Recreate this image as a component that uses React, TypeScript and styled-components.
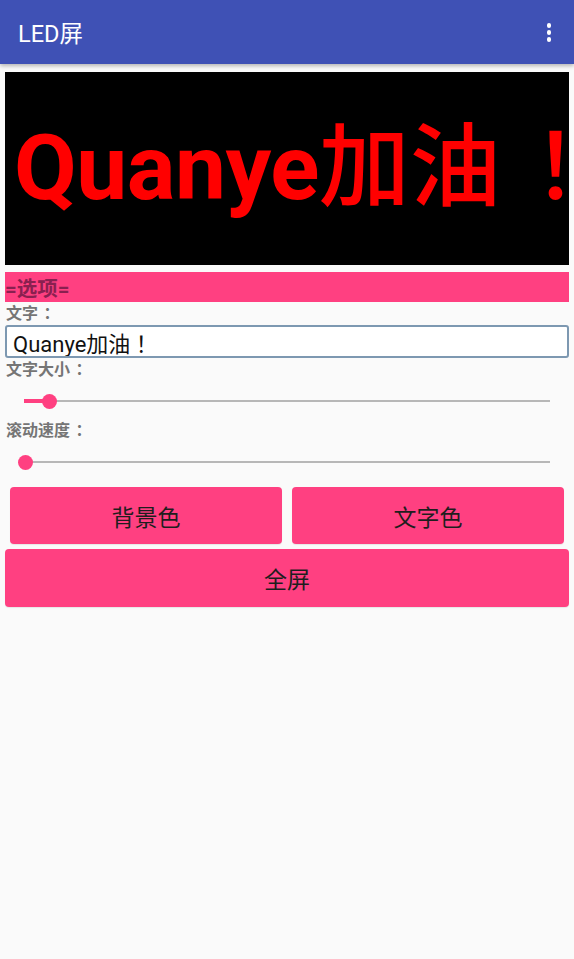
import React from 'react'
import styled, { createGlobalStyle } from 'styled-components'

const GlobalStyle = createGlobalStyle`
  html, body {
    margin: 0;
    padding: 0;
    background: #fafafa;
    font-family: Roboto, "Noto Sans CJK SC", sans-serif;
  }
`

const Page = styled.div`
  width: 574px;
  height: 959px;
  background: #fafafa;
  overflow: hidden;
`

const AppBar = styled.header`
  height: 64px;
  background: #3f51b5;
  display: flex;
  align-items: center;
  justify-content: space-between;
  padding: 0 23px 0 18px;
  box-sizing: border-box;
  box-shadow: 0 2px 4px rgba(0, 0, 0, 0.28);
  position: relative;
  z-index: 1;
  h1 {
    margin: 0;
    color: #fff;
    font-size: 23.5px;
    font-weight: 400;
  }
`

const MoreButton = styled.div`
  display: flex;
  flex-direction: column;
  gap: 2.5px;
  margin-top: 1px;
  span {
    width: 4.5px;
    height: 4.5px;
    border-radius: 50%;
    background: #fff;
  }
`

const Content = styled.main`
  padding: 8px 5px 0;
  display: flex;
  flex-direction: column;
`

// full-width punctuation: the device font sets the mark near the middle of its em box
const Punct = styled.span`
  display: inline-block;
  box-sizing: border-box;
  width: 1em;
  padding-left: 0.35em;
  text-align: left;
`

const Screen = styled.div`
  height: 193px;
  background: #000;
  display: flex;
  align-items: center;
  overflow: hidden;
  white-space: nowrap;
  padding-left: 9px;
  color: #ff0000;
  font-size: 91px;
  font-weight: 700;
  letter-spacing: -0.5px;
  line-height: 1;
  .cjk {
    font-weight: 500;
    letter-spacing: 0;
  }
`

const Section = styled.div`
  margin-top: 7px;
  height: 30px;
  background: #ff4081;
  color: #8a2050;
  font-size: 20.5px;
  font-weight: 700;
  line-height: 35px;
`

const Label = styled.div`
  color: #757575;
  font-size: 16px;
  font-weight: 700;
  height: 23px;
  line-height: 24px;
  padding-left: 1px;
`

const TextInput = styled.input`
  height: 33px;
  box-sizing: border-box;
  border: 2px solid #7d98b1;
  border-radius: 3px;
  background: #fff;
  font-family: Roboto, "Noto Sans CJK JP", sans-serif;
  font-size: 22px;
  color: #111;
  padding: 0 6px;
  outline: none;
  width: 100%;
`

const SliderRow = styled.div`
  height: 38px;
  position: relative;
  margin: 0 19px;
`

const Track = styled.div`
  position: absolute;
  left: 0;
  right: 0;
  top: 19px;
  height: 2px;
  background: #b7b7b7;
`

const Fill = styled.div`
  position: absolute;
  left: 0;
  top: 18px;
  height: 4px;
  background: #ff4081;
`

const Thumb = styled.div`
  position: absolute;
  top: 12.5px;
  width: 15px;
  height: 15px;
  margin-left: -7.5px;
  border-radius: 50%;
  background: #ff4081;
`

const ButtonRow = styled.div`
  display: grid;
  grid-template-columns: 1fr 1fr;
  gap: 10px;
  padding: 0 5px;
  margin-top: 7px;
`

const Button = styled.button<{ $wide?: boolean }>`
  height: ${p => (p.$wide ? 58 : 57)}px;
  border: none;
  border-radius: 4px;
  background: #ff4081;
  color: #1e1e1e;
  font-family: Roboto, "Noto Sans CJK SC", sans-serif;
  font-size: 23px;
  box-shadow: 0 1px 1px rgba(0, 0, 0, 0.08);
  margin-top: ${p => (p.$wide ? 5 : 0)}px;
`

const Slider: React.FC<{ value: number; width: number }> = ({ value, width }) => {
  const x = (value / 100) * width
  return (
    <SliderRow>
      <Track />
      {x > 0 && <Fill style={{ width: x }} />}
      <Thumb style={{ left: x + 1 }} />
    </SliderRow>
  )
}

export default function App() {
  const [text, setText] = React.useState('Quanye加油！')
  return (
    <Page>
      <GlobalStyle />
      <AppBar>
        <h1>LED屏</h1>
        <MoreButton>
          <span />
          <span />
          <span />
        </MoreButton>
      </AppBar>
      <Content>
        <Screen>
          Quanye
          <span className="cjk">
            加油<Punct>！</Punct>
          </span>
        </Screen>
        <Section>=选项=</Section>
        <Label>
          文字<Punct>：</Punct>
        </Label>
        <TextInput value={text} onChange={e => setText(e.target.value)} />
        <Label>
          文字大小<Punct>：</Punct>
        </Label>
        <Slider value={4.6} width={525} />
        <Label>
          滚动速度<Punct>：</Punct>
        </Label>
        <Slider value={0} width={525} />
        <ButtonRow>
          <Button>背景色</Button>
          <Button>文字色</Button>
        </ButtonRow>
        <Button $wide>全屏</Button>
      </Content>
    </Page>
  )
}
